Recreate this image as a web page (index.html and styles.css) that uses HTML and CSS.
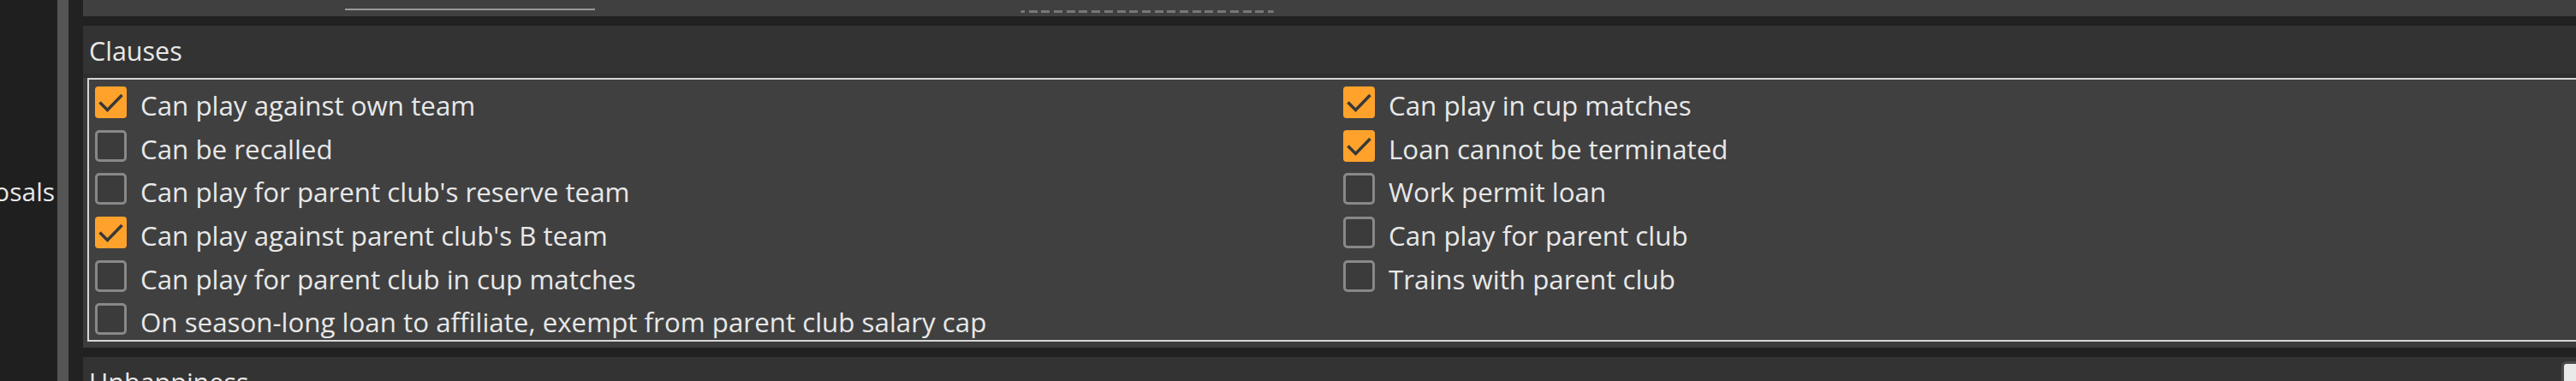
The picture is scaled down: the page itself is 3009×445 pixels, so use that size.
FILE: index.html
```html
<!DOCTYPE html>
<html lang="en">
<head>
    <meta charset="UTF-8">
    <meta name="viewport" content="width=device-width, initial-scale=1.0">
    <title>Loan clauses</title>
    <link rel="stylesheet" href="styles.css">
</head>
<body>
<div class="sidebar">
    <span class="side-label">Proposals</span>
</div>
<div class="scroll-strip"></div>
<div class="gutter"></div>

<main class="main">
    <div class="tabbar">
        <span class="tab-underline"></span>
        <span class="drag-handle"></span>
    </div>

    <section class="panel">
        <h3 class="panel-title">Clauses</h3>
        <div class="panel-body">
            <div class="clause-box">
                <div class="clause-col">
                    <label class="clause">
                        <span class="check is-on"><svg viewBox="0 0 37 37"><polyline points="5.5,18.5 14.5,27.5 31.5,10"/></svg></span>
                        <span class="clause-text">Can play against own team</span>
                    </label>
                    <label class="clause">
                        <span class="check"></span>
                        <span class="clause-text">Can be recalled</span>
                    </label>
                    <label class="clause">
                        <span class="check"></span>
                        <span class="clause-text">Can play for parent club's reserve team</span>
                    </label>
                    <label class="clause">
                        <span class="check is-on"><svg viewBox="0 0 37 37"><polyline points="5.5,18.5 14.5,27.5 31.5,10"/></svg></span>
                        <span class="clause-text">Can play against parent club's B team</span>
                    </label>
                    <label class="clause">
                        <span class="check"></span>
                        <span class="clause-text">Can play for parent club in cup matches</span>
                    </label>
                    <label class="clause">
                        <span class="check"></span>
                        <span class="clause-text">On season-long loan to affiliate, exempt from parent club salary cap</span>
                    </label>
                </div>
                <div class="clause-col">
                    <label class="clause">
                        <span class="check is-on"><svg viewBox="0 0 37 37"><polyline points="5.5,18.5 14.5,27.5 31.5,10"/></svg></span>
                        <span class="clause-text">Can play in cup matches</span>
                    </label>
                    <label class="clause">
                        <span class="check is-on"><svg viewBox="0 0 37 37"><polyline points="5.5,18.5 14.5,27.5 31.5,10"/></svg></span>
                        <span class="clause-text">Loan cannot be terminated</span>
                    </label>
                    <label class="clause">
                        <span class="check"></span>
                        <span class="clause-text">Work permit loan</span>
                    </label>
                    <label class="clause">
                        <span class="check"></span>
                        <span class="clause-text">Can play for parent club</span>
                    </label>
                    <label class="clause">
                        <span class="check"></span>
                        <span class="clause-text">Trains with parent club</span>
                    </label>
                </div>
            </div>
        </div>
    </section>

    <section class="panel">
        <div class="panel-head">
            <h3 class="panel-title">Unhappiness</h3>
            <span class="toggle"></span>
        </div>
    </section>
</main>
</body>
</html>
```

FILE: styles.css
```css
body {
    margin: 0;
    width: 3009px;
    height: 445px;
    overflow: hidden;
    display: flex;
    background-color: #212121;
    font-family: "Open Sans", "Noto Sans", sans-serif;
    color: #e8e8e8;
}

.sidebar {
    width: 67px;
    flex: none;
    background-color: #1f1f1f;
    display: flex;
    justify-content: flex-end;
    align-items: flex-start;
    padding-top: 202px;
    padding-right: 3px;
    box-sizing: border-box;
    overflow: hidden;
}

.side-label {
    font-size: 30px;
    line-height: 43px;
    white-space: nowrap;
}

.scroll-strip {
    width: 13px;
    flex: none;
    background-color: #555;
}

.gutter {
    width: 17px;
    flex: none;
    background-color: #222;
}

.main {
    flex: 1;
    min-width: 0;
    display: flex;
    flex-direction: column;
    gap: 11px;
    overflow: hidden;
}

.tabbar {
    height: 19px;
    flex: none;
    background-color: #404040;
    display: flex;
    align-items: flex-start;
}

.tab-underline {
    margin: 10px 0 0 306px;
    width: 292px;
    height: 2px;
    background-color: #9a9a9a;
}

.drag-handle {
    margin: 12px 0 0 497px;
    width: 296px;
    height: 3px;
    border-radius: 2px;
    background: repeating-linear-gradient(90deg, #777 0 10px, transparent 10px 14.7px);
    background-position: -5px 0;
}

.panel {
    flex: none;
    background-color: #333;
}

.panel-head {
    display: flex;
    align-items: flex-start;
}

.panel-title {
    margin: 0;
    height: 56px;
    padding-left: 7px;
    font-size: 30.5px;
    font-weight: normal;
    line-height: 59px;
}

.toggle {
    margin: 5px -17px 0 auto;
    width: 28px;
    height: 28px;
    border: 3px solid #4a4a4a;
    border-radius: 6px;
    background-color: #e9e9e9;
}

.panel-body {
    border-top: 5px solid #2e2e2e;
    background-color: #3c3c3c;
    padding: 0 0 7px 5px;
}

.clause-box {
    display: flex;
    margin-right: -20px;
    padding-left: 7px;
    border: 2px solid #d6d6d6;
    background-color: #404040;
}

.clause-col {
    width: 1462px;
    display: flex;
    flex-direction: column;
}

.clause {
    height: 50.67px;
    display: flex;
    align-items: flex-start;
    gap: 16px;
    white-space: nowrap;
}

.clause-text {
    padding-top: 9px;
    font-size: 31.3px;
    line-height: 43px;
}

.check {
    width: 37px;
    height: 37px;
    flex: none;
    box-sizing: border-box;
    margin-top: 8px;
    border: 3px solid #888;
    border-radius: 5px;
    background-color: #3b3b3b;
}

.check.is-on {
    border: none;
    border-radius: 4px;
    background-color: #ffa22b;
}

.check svg {
    display: block;
    width: 37px;
    height: 37px;
}

.check polyline {
    fill: none;
    stroke: #383838;
    stroke-width: 3.5;
}
```
